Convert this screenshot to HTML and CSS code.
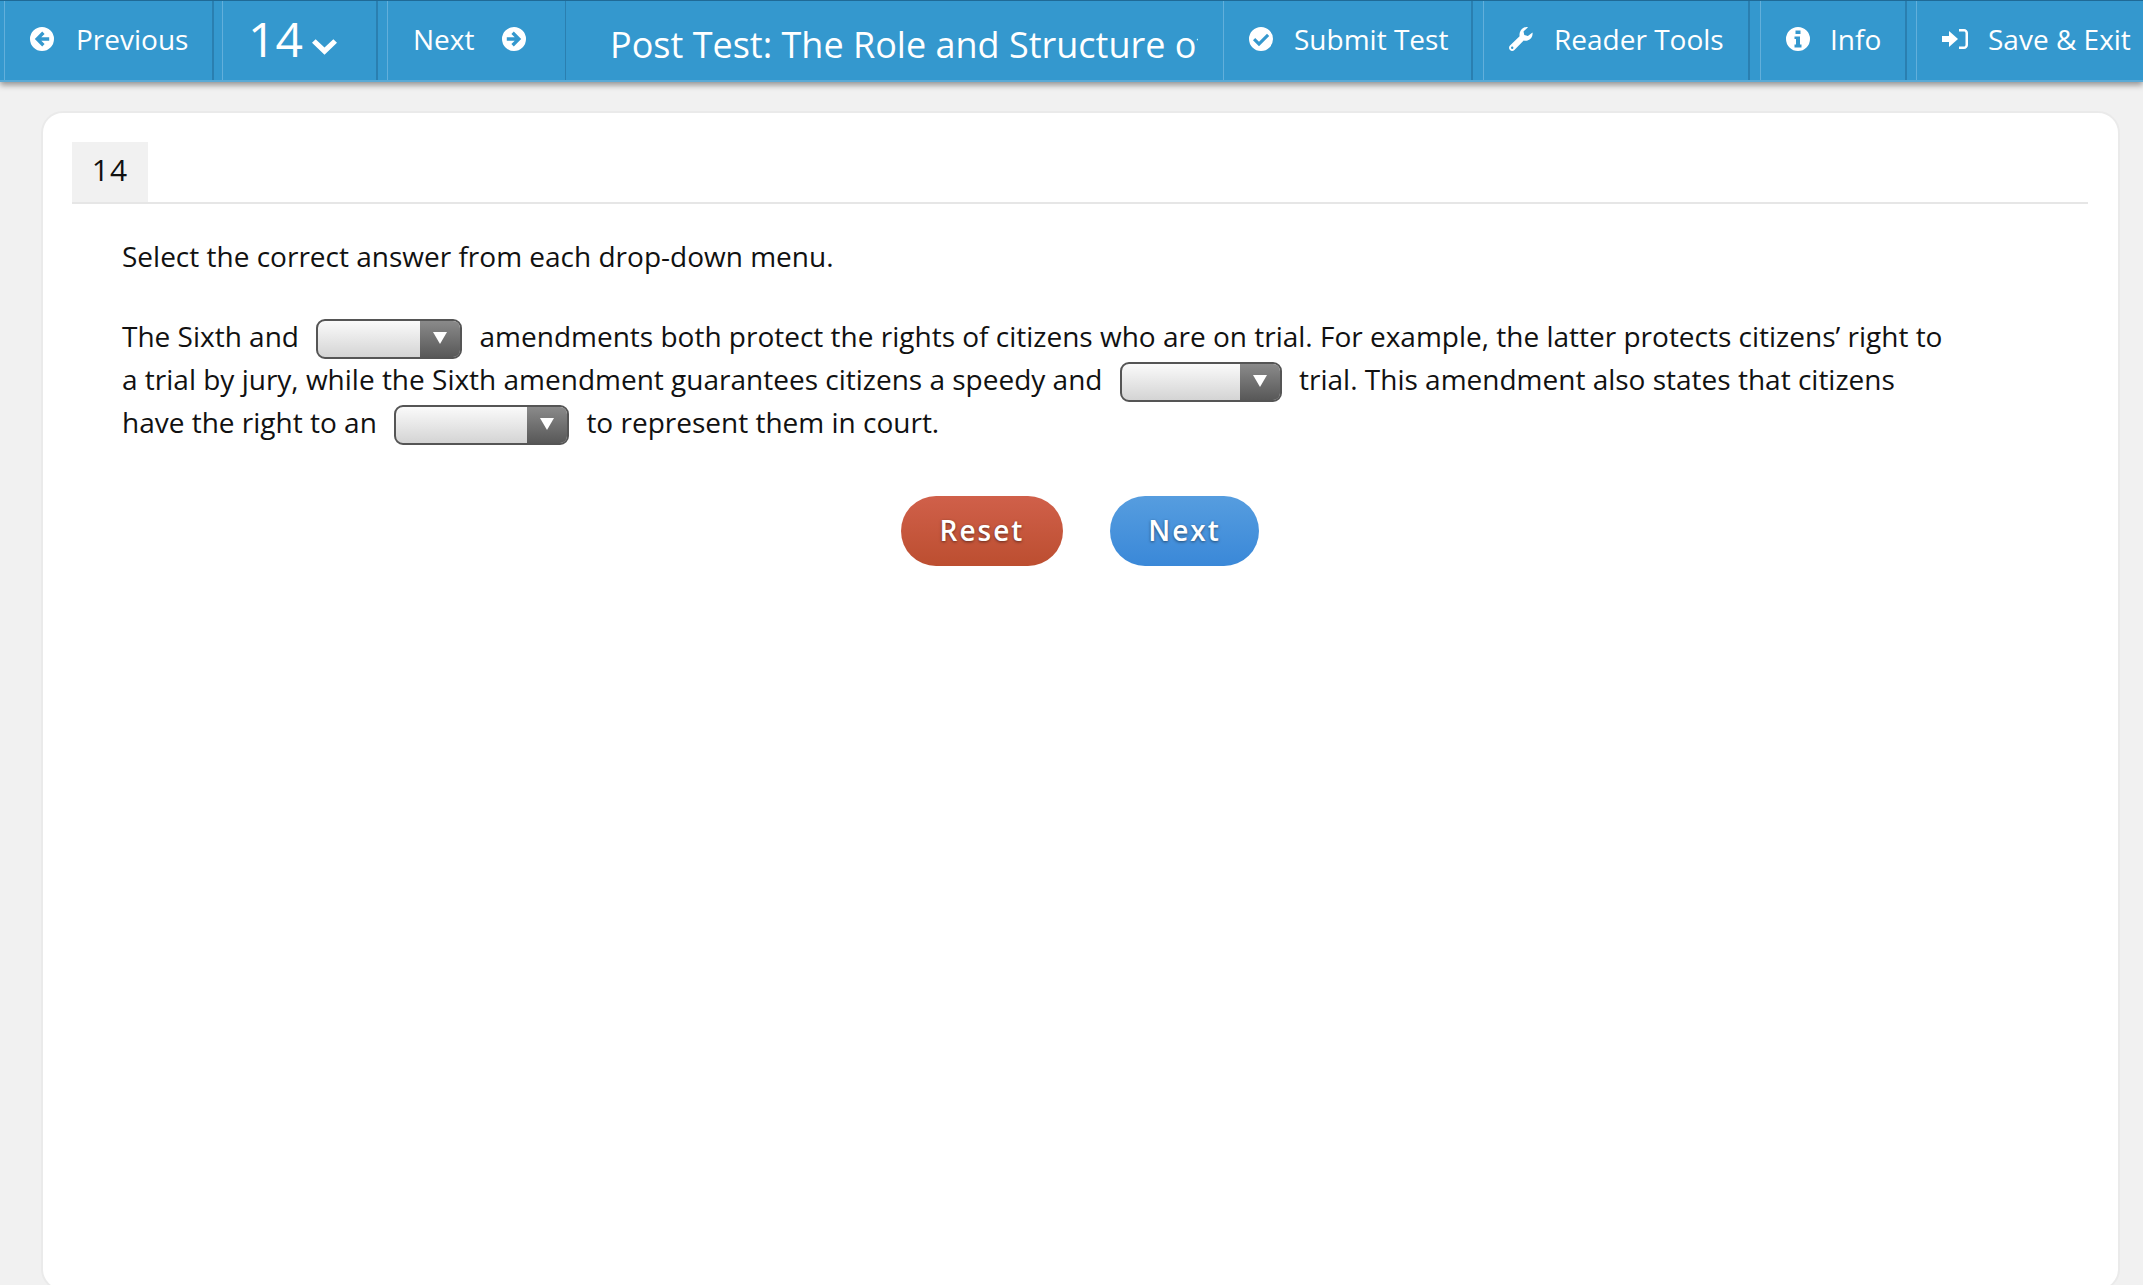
FILE: index.html
```html
<!DOCTYPE html>
<html>
<head>
<title>Post Test: The Role and Structure of the Constitution</title>
<link rel="stylesheet" href="styles.css">
</head>
<body>

<div class="navbar">
  <a class="navItem itemPrev">
    <svg class="icon" viewBox="0 0 24 24"><path fill-rule="evenodd" d="M12 0a12 12 0 1 1 0 24a12 12 0 0 1 0-24zM12.2 4.6L4.8 12l7.4 7.4l2.4-2.4l-3.3-3.2h7.9v-3.6h-7.9l3.3-3.2z"/></svg>
    <span>Previous</span>
  </a>
  <a class="navItem itemNumber">
    <span class="bigNumber">14</span>
    <svg class="chevron" viewBox="0 0 24 16"><path d="M3.500 1L0 4.500L12 16L24 4.500L20.500 1L12 9z"/></svg>
  </a>
  <a class="navItem itemNext">
    <span>Next</span>
    <svg class="icon" viewBox="0 0 24 24"><path fill-rule="evenodd" d="M12 0a12 12 0 1 1 0 24a12 12 0 0 1 0-24zM11.800 4.600L9.400 7l3.300 3.200H4.800v3.600h7.900L9.400 17l2.400 2.400l7.400-7.400z"/></svg>
  </a>
  <div class="navTitle">Post Test: The Role and Structure of the Constitution</div>
  <a class="navItem itemSubmit">
    <svg class="icon" viewBox="0 0 24 24"><path fill-rule="evenodd" d="M12 0a12 12 0 1 1 0 24a12 12 0 0 1 0-24zM18 6.800l-8 8l-3.800-3.800l-2.200 2.200l6 6l10.200-10.200z"/></svg>
    <span>Submit Test</span>
  </a>
  <a class="navItem itemTools">
    <svg class="icon wrench" viewBox="0 0 24 24"><path fill-rule="evenodd" d="M23.500 5.500c.6 3.500-1.500 7-5 8c-1.300.4-2.600.3-3.800-.1L5.400 23c-1.200 1.300-3.200 1.300-4.400.1c-1.300-1.300-1.300-3.300 0-4.500l9.600-9.400C10 6 11.500 2.400 14.600.8C16 .1 17.600-.1 19 .2l-4.500 4.300l.8 3.600l3.600.9zM3.200 19.600a1.200 1.200 0 1 0 0 2.400a1.200 1.200 0 0 0 0-2.400z"/></svg>
    <span>Reader Tools</span>
  </a>
  <a class="navItem itemInfo">
    <svg class="icon" viewBox="0 0 24 24"><path fill-rule="evenodd" d="M12 0a12 12 0 1 1 0 24a12 12 0 0 1 0-24zM9.500 3.500v3.600h5V3.500zM8.500 9.500v2.500h1.500v5.500H8.500v3h7v-3H14V9.500z"/></svg>
    <span>Info</span>
  </a>
  <a class="navItem itemSave">
    <svg class="icon signin" viewBox="0 0 26 24"><path fill-rule="evenodd" d="M0 9h7V4l9 8l-9 8v-5H0zM17 2h5c2.200 0 4 1.800 4 4v12c0 2.200-1.800 4-4 4h-5v-2.500h5c.8 0 1.500-.7 1.500-1.500V6c0-.8-.7-1.500-1.500-1.500h-5z"/></svg>
    <span>Save &amp; Exit</span>
  </a>
</div>

<div class="card">
  <div class="tabRow">
    <div class="tabNumber">14</div>
  </div>

  <div class="question">
    <p class="instruction">Select the correct answer from each drop-down menu.</p>
    <p class="passage">
      The Sixth and <span class="dropdown ddFirst"><span class="ddArrow"></span></span> amendments both protect the rights of citizens who are on trial. For example, the latter protects citizens’ right to a trial by jury, while the Sixth amendment guarantees citizens a speedy and <span class="dropdown ddSecond"><span class="ddArrow"></span></span> trial. This amendment also states that citizens have the right to an <span class="dropdown ddThird"><span class="ddArrow"></span></span> to represent them in court.
    </p>
  </div>

  <div class="buttons">
    <a class="btn btnReset">Reset</a>
    <a class="btn btnNext">Next</a>
  </div>
</div>

</body>
</html>
```

FILE: styles.css
```css
html, body {
  margin: 0;
  height: 100%;
  overflow: hidden;
}
body {
  background-color: #F1F1F1;
  font-family: "Open Sans", "Noto Sans", sans-serif;
  color: #111111;
}

/* top bar */
.navbar {
  display: flex;
  box-sizing: border-box;
  height: 82px;
  border-top: 1px solid #1F6A96;
  border-bottom: 2px solid #5AAAD6;
  background-color: #3498CE;
  box-shadow: 0 3px 6px rgba(0, 0, 0, 0.4);
  padding-left: 4px;
  color: #FFFFFF;
}
.navItem {
  display: flex;
  align-items: center;
  flex: none;
  box-sizing: border-box;
  border-left: 1px solid #62AFDB;
  border-right: 2px solid #2A7FB0;
  margin-right: 8px;
  font-size: 28px;
  padding-bottom: 4px;
}
.icon {
  width: 24px;
  height: 24px;
  fill: #FFFFFF;
  flex: none;
}
.itemPrev { width: 210px; padding-left: 25px; gap: 22px; }
.itemNumber { width: 156px; padding-left: 25px; margin-right: 9px; }
.bigNumber { font-size: 48px; line-height: 1; }
.chevron { width: 25px; height: 17px; fill: #FFFFFF; margin-left: 9px; margin-top: 16px; }
.itemNext { width: 179px; padding-left: 25px; gap: 28px; margin-right: 0; border-right: 1px solid #2A7FB0; }
.navTitle {
  width: 632px;
  margin-right: 25px;
  flex: none;
  box-sizing: border-box;
  padding-left: 44px;
  font-size: 36px;
  line-height: 88px;
  height: 79px;
  white-space: nowrap;
  overflow: hidden;
}
.itemSubmit { width: 250px; padding-left: 25px; gap: 21px; margin-right: 10px; }
.itemTools { width: 267px; padding-left: 25px; gap: 21px; margin-right: 10px; }
.itemInfo { width: 147px; padding-left: 25px; gap: 20px; margin-right: 9px; }
.itemSave { flex: 1; padding-left: 25px; gap: 20px; margin-right: 0; border-right: 0; white-space: nowrap; overflow: hidden; }
.signin { width: 26px; }

/* question card */
.card {
  margin: 29px 23px 0 41px;
  height: 1180px;
  box-sizing: border-box;
  background-color: #FFFFFF;
  border: 2px solid #EAEAEA;
  border-radius: 22px;
  padding: 29px 30px 0 29px;
}
.tabRow {
  border-bottom: 2px solid #E6E6E6;
}
.tabNumber {
  width: 76px;
  height: 60px;
  line-height: 56px;
  background-color: #F1F1F1;
  text-align: center;
  font-size: 30px;
  letter-spacing: 1px;
}
.question {
  padding: 0 133px 0 50px;
  font-size: 28px;
  line-height: 40px;
}
.instruction {
  margin: 32px 0 40px 0;
}
.passage {
  margin: 0;
}
.dropdown {
  display: inline-block;
  box-sizing: border-box;
  position: relative;
  height: 40px;
  vertical-align: -12px;
  margin: 0 10px;
  border: 2px solid #555555;
  border-radius: 9px;
  background: linear-gradient(#FAFAFA, #D4D4D4);
  overflow: hidden;
}
.ddFirst { width: 146px; }
.ddSecond { width: 162px; }
.ddThird { width: 175px; }
.ddArrow {
  position: absolute;
  top: 0;
  right: 0;
  bottom: 0;
  width: 40px;
  background: linear-gradient(#8A8A8A, #585858);
}
.ddArrow::after {
  content: "";
  position: absolute;
  left: 13px;
  top: 11px;
  border-left: 7px solid transparent;
  border-right: 7px solid transparent;
  border-top: 12px solid #FFFFFF;
}
.buttons {
  display: flex;
  justify-content: center;
  gap: 47px;
  margin-top: 51px;
}
.btn {
  display: block;
  height: 70px;
  line-height: 68px;
  border-radius: 35px;
  text-align: center;
  color: #FFFFFF;
  font-size: 28px;
  font-weight: 600;
  letter-spacing: 2px;
  text-shadow: 0 1px 3px rgba(0, 0, 0, 0.5);
}
.btnReset {
  width: 162px;
  background: linear-gradient(#D0604A, #BC4E30);
}
.btnNext {
  width: 149px;
  background: linear-gradient(#569DDF, #3A88D8);
}
```
